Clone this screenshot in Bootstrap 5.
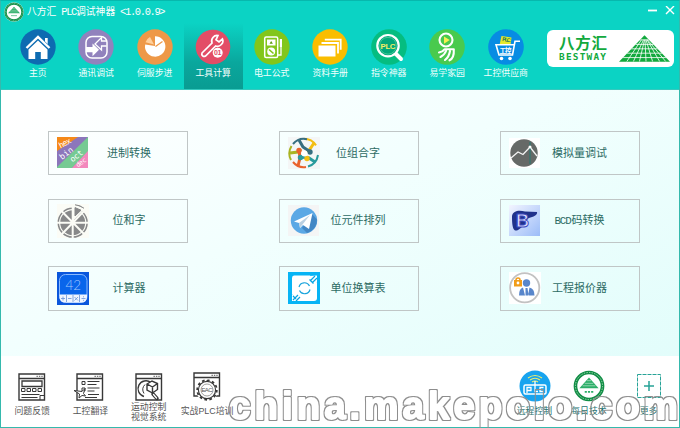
<!DOCTYPE html>
<html lang="zh-CN">
<head>
<meta charset="utf-8">
<meta name="viewport" content="width=device-width, initial-scale=1">
<title>八方汇 PLC调试神器</title>
<link rel="stylesheet" href="https://cdn.jsdelivr.net/npm/bootstrap@5.3.0/dist/css/bootstrap.min.css">
<style>
body{font-family:"Liberation Sans","Noto Sans CJK SC",sans-serif;width:680px;height:428px;line-height:1}
svg{display:block;flex:none}
.app{width:680px;height:428px;border:1px solid #35b9ad;border-top-color:#07b8ad;background:#fff}
.app-head{height:89px;background:#0bd3c4;border-bottom:1px solid #35c9be;color:#fff}
.title-row{height:22px;padding-left:3px;padding-right:4px}
.title-text{font-family:"Liberation Mono","Noto Sans CJK SC",monospace;font-size:9.8px;padding-left:3px;white-space:pre}
.half{font-size:10.4px;letter-spacing:-1.33px}
.main-tabs{height:66px;padding-left:7.5px}
.tab{width:58.5px;height:66px;padding-top:6px;color:#f2fffd;font-size:8.9px;white-space:nowrap}
.tab svg{margin-bottom:4px}
.tab-on{background:linear-gradient(#0bd3c4,#0aa79d 60%,#099c92)}
.brand-box{width:127px;height:37px;border-radius:6px;background:#fff;color:#12a93d;margin:7px 5px 0 auto;padding:0 4px 0 12px}
.brand-cn{font-size:15.5px;font-weight:700;letter-spacing:.7px}
.brand-en{font-family:"DejaVu Sans Mono","Liberation Mono",monospace;font-size:9.4px;font-weight:700;letter-spacing:1.25px;margin-top:1px;line-height:9px}
.tools{height:266px;padding:41px 0 0 47px;background:linear-gradient(155deg,#fff 5%,#f2fffe 45%,#e2fdfb)}
.tool-grid{display:grid;grid-template-columns:230.5px 221.5px 140px;row-gap:23.2px}
.tool{width:140px;height:44.4px;border:1px solid #c0c6c6;padding-left:8px;font-size:11px;color:#2c6b64}
.tool span{width:80px;text-align:center}
.tool:not(:nth-child(3n+1)) span{width:77px}
.tool i{font:10.8px "Liberation Mono",monospace;letter-spacing:-1.1px;margin-right:1px}
.foot{height:70px;font-size:8.9px;color:#555;white-space:nowrap}
.foot-left{padding-left:2px}
.foot-item{width:58.3px;padding-top:17px}
.foot-label{line-height:10px;text-align:center;height:20px;margin-top:1px}
.foot-right{margin-left:auto;color:#2b7370;padding-right:2px}
.foot-right .foot-item{width:57px;padding-top:14px}
.foot-right .foot-label{margin-top:0}
.foot-right .foot-item:nth-child(2){margin-left:-2.5px;margin-right:2.5px}
.wm{left:222px;top:377px;pointer-events:none}
</style>
<script src="https://cdn.jsdelivr.net/npm/bootstrap@5.3.0/dist/js/bootstrap.bundle.min.js"></script>
</head>
<body class="overflow-hidden m-0">
<svg width="0" height="0" class="position-absolute">
<defs>
<clipPath id="tri"><path d="M25 0L50 26H0z"/></clipPath>
<symbol id="pyr" viewBox="0 0 50 26"><path d="M25 0L50 26H0z" fill="#12a93d"/><path clip-path="url(#tri)" stroke="#fff" stroke-width=".8" fill="none" d="M0 4.5h50M0 9h50M0 13.3h50M0 17.6h50M0 21.9h50M22 4.5L7.5 26M24 4.5L14 26M25 4.5L20 26M25.5 4.5L26.5 26M26.5 4.5L33 26M27.5 4.5L40 26M28 4.5L46 26"/></symbol>
<symbol id="seal" viewBox="0 0 30 30"><circle cx="15" cy="15" r="14.6" fill="#fff"/><circle cx="15" cy="15" r="12.7" fill="#fff" stroke="#108d45" stroke-width="3.4"/><circle cx="15" cy="15" r="12.7" fill="none" stroke="#a5dcb6" stroke-width=".9" stroke-dasharray="1.3 1.2" pathLength="80"/><path d="M15 7l9 10H6z" fill="#2cae68"/><path d="M9 14.8h12M11 12.5h8M13 10h4" stroke="#c7ebd5" stroke-width=".6"/><path d="M11 20.5h8" stroke="#2cae68" stroke-width="1.5" stroke-dasharray="2 1"/></symbol>
<symbol id="win" viewBox="0 0 28 28"><path d="M1 1h25.5v26H1zM1 5.5h25.5" fill="none" stroke="#383838" stroke-width="1.4"/><path d="M18.5 3.3h6.5" stroke="#555" stroke-dasharray="1.4 1"/></symbol>
<filter id="edge" x="-2%" y="-10%" width="104%" height="120%"><feMorphology in="SourceAlpha" operator="dilate" radius="1" result="a"/><feComposite in="a" in2="SourceAlpha" operator="out" result="b"/><feFlood flood-color="#8d8d8d"/><feComposite in2="b" operator="in"/></filter>
</defs>
</svg>
<main class="app position-relative">
<header class="app-head">
<div class="title-row d-flex align-items-center">
<svg width="20" height="20"><use href="#seal"/></svg>
<span class="title-text">八方汇<span class="half"> PLC</span>调试神器<span class="half"> &lt;1.0.0.9&gt;</span></span>
<svg class="ms-auto" width="28" height="12" fill="none" stroke="#fff"><path d="M1 4.500h9" stroke-width="1.8"/><path d="M19 0l8 8M27 0l-8 8" stroke-width="1.4"/></svg>
</div>
<div class="d-flex">
<nav class="main-tabs d-flex">
<div class="tab d-flex flex-column align-items-center"><svg width="36" height="36" viewBox="0 0 36 36"><circle cx="18" cy="18" r="17.7" fill="#0d6bb1"/><path d="M6.5 19L18 8l11.5 11" stroke="#fff" stroke-width="2.4" fill="none"/><path d="M8.5 20.5L18 11.5l9.5 9V30h-6.7v-7h-5.6v7H8.5zM25 9h2.7v6L25 12.5z" fill="#fff"/></svg>主页</div>
<div class="tab d-flex flex-column align-items-center"><svg width="36" height="36" viewBox="0 0 36 36"><circle cx="18" cy="18" r="17.7" fill="#9182bd"/><rect x="8" y="7.5" width="21" height="21.5" rx="6" fill="none" stroke="#fff" stroke-width="1.5"/><path d="M8 18h6.5v-3.5l6.5 6.3-6.5 6.4v-4H8z" fill="#fff"/><path d="M28.5 12h-5V8.5L17 15l6.5 6v-4h5" fill="none" stroke="#fff" stroke-width="1.3"/></svg>通讯调试</div>
<div class="tab d-flex flex-column align-items-center"><svg width="36" height="36" viewBox="0 0 36 36"><circle cx="18" cy="18" r="17.7" fill="#ee9847"/><path d="M18 17V7.3A10.2 10.2 0 1 1 8.2 15.5z" fill="#fff"/><path d="M18.5 17.5l7-5" stroke="#ee9847" stroke-width="1.2"/><path d="M17 15.5L13 8a9 9 0 0 0-4.5 5.3z" fill="#ffd09c"/></svg>伺服步进</div>
<div class="tab tab-on d-flex flex-column align-items-center"><svg width="36" height="36" viewBox="0 0 36 36"><circle cx="18" cy="18" r="17.3" fill="#e34d66"/><path d="M7 24L17 14c-1.5-4 2-8.2 6-7.5l-2 4.3 3 2.2 3.5-3c1.7 3.8-2.5 8.5-6.8 7L10.5 27a2.4 2.4 0 0 1-3.5-3z" fill="none" stroke="#fff" stroke-width="1.7"/><circle cx="22.7" cy="23.7" r="5" fill="#fff"/><text x="19" y="26.3" font-size="7" font-weight="700" font-family="Liberation Sans" fill="#e34d66" textLength="7.4">01</text></svg>工具计算</div>
<div class="tab d-flex flex-column align-items-center"><svg width="36" height="36" viewBox="0 0 36 36"><circle cx="18" cy="18" r="17.7" fill="#82c61b"/><rect x="10.7" y="8" width="13" height="20.5" rx="1.5" fill="none" stroke="#fff" stroke-width="1.5"/><path d="M13 10.5h8.5v6H13z" fill="#fff"/><path d="M17.2 12l1.7 2.8h-3.4z" fill="#5c9d12"/><circle cx="17.2" cy="22.5" r="4" fill="#fff"/><path d="M15 20.5l4.5 4" stroke="#82c61b" stroke-width="1.6"/><path d="M24 26h3V11" stroke="#fff" stroke-width="1.3" fill="none"/><path d="M26.9 10v8" stroke="#fff" stroke-width="2.2"/></svg>电工公式</div>
<div class="tab d-flex flex-column align-items-center"><svg width="36" height="36" viewBox="0 0 36 36"><circle cx="18" cy="18" r="17.7" fill="#fabd00"/><path d="M6.5 16.5h17v11h-17z" fill="#fff"/><path d="M9.5 14h16.5v10.5M12.8 10.7h15.9v10" fill="none" stroke="#fff" stroke-width="1.8"/></svg>资料手册</div>
<div class="tab d-flex flex-column align-items-center"><svg width="36" height="36" viewBox="0 0 36 36"><circle cx="18" cy="18" r="17.8" fill="#05bd80"/><path d="M25 25l5 5" stroke="#fff" stroke-width="4" stroke-linecap="round"/><circle cx="17" cy="16.7" r="10.7" fill="#02a879" stroke="#fff" stroke-width="2.2"/><circle cx="17" cy="16.7" r="8.4" fill="none" stroke="#52cf9e" stroke-width=".8"/><text x="9.5" y="19.6" textLength="15" font-family="Liberation Sans" font-size="7.8" font-weight="700" fill="#f6ef65">PLC</text></svg>指令神器</div>
<div class="tab d-flex flex-column align-items-center"><svg width="36" height="36" viewBox="0 0 36 36"><circle cx="18" cy="18" r="17.8" fill="#49ca4e"/><g fill="none" stroke="#fff" stroke-width="2.1" stroke-linecap="round" stroke-linejoin="round"><circle cx="17" cy="11" r="6.5"/><path d="M10 23.5q4-1 5.5-3.2h9.3q.5 9-4.3 11M17 22q-1.5 4-5.500 6M21 22q-1 6-5 9"/></g><path d="M15 7.5l5.7 3.6-5.7 3.6z" fill="#f9f052"/></svg>易学家园</div>
<div class="tab d-flex flex-column align-items-center"><svg width="36" height="36" viewBox="0 0 36 36"><circle cx="18" cy="18" r="17.8" fill="#078ce3"/><path d="M13.5 7l10 1.5-1 7.5h-11z" fill="#e6eb2c"/><text x="14" y="12" transform="rotate(8 14 12)" textLength="8.5" font-size="5.5" font-weight="700" font-family="Liberation Sans" fill="#297652">PLC</text><path d="M32 12.3h-5L24.5 26H11L8 15.7h18" fill="none" stroke="#fff" stroke-width="1.6"/><text x="11.5" y="23.7" textLength="12" font-size="6.5" font-weight="700" font-family="Noto Sans CJK SC" fill="#fff">工控</text><circle cx="13.5" cy="29.5" r="1.8" fill="#fff"/><circle cx="22" cy="29.5" r="1.8" fill="#fff"/></svg>工控供应商</div>
</nav>
<div class="brand-box d-flex align-items-center justify-content-between"><div><div class="brand-cn">八方汇</div><div class="brand-en">BESTWAY</div></div><svg width="51" height="27"><use href="#pyr"/></svg></div>
</div>
</header>
<section class="tools">
<div class="tool-grid">
<div class="tool d-flex align-items-center"><svg width="32" height="32" viewBox="0 0 32 32"><path d="M0 0h31v31H0z" fill="#8c76bb"/><path d="M0 0h21L0 14z" fill="#f58918"/><path d="M31 0v16L15 31H0v-1z" fill="#76ca93"/><path d="M31 14v17H15z" fill="#f388bd"/><g fill="#fff" font-family="DejaVu Sans Mono" font-size="8"><text x="3.5" y="11.5" transform="rotate(-28 3.5 11.5)" textLength="13">hex</text><text x="5" y="23" transform="rotate(-38 5 23)" textLength="15">bin</text><text x="15.5" y="25.5" transform="rotate(-38 15.5 25.5)" textLength="14">oct</text><text x="21" y="30.5" transform="rotate(-36 21 30.5)" font-size="6.5" textLength="11">dec</text></g></svg><span>进制转换</span></div>
<div class="tool d-flex align-items-center"><svg width="32" height="32" viewBox="0 0 32 32"><path d="M0 0h32v32H0z" fill="#f4f6f6"/><path d="M16 1.8A14.2 14.2 0 0 1 28 8.4" fill="none" stroke="#f3bd10" stroke-width="2"/><path d="M26 6l-4 6-3 3" fill="none" stroke="#f3bd10" stroke-width="3"/><path d="M5 7A14.2 14.2 0 0 1 19 2.2" fill="none" stroke="#376e80" stroke-width="2"/><path d="M11 3l4 7 6 4" fill="none" stroke="#376e80" stroke-width="3"/><path d="M3 23A14.2 14.2 0 0 1 3.500 9" fill="none" stroke="#a9b522" stroke-width="2"/><path d="M2 16l8-1 3-3" fill="none" stroke="#a9b522" stroke-width="3"/><path d="M18 30A14.2 14.2 0 0 1 5 25" fill="none" stroke="#e9622c" stroke-width="2"/><path d="M10 29l2-8-1-8" fill="none" stroke="#e9622c" stroke-width="3"/><path d="M30 18A14.2 14.2 0 0 1 20 29.500" fill="none" stroke="#2a9a9c" stroke-width="2"/><path d="M27 25l-6-4-8-1" fill="none" stroke="#2a9a9c" stroke-width="3"/><circle cx="22" cy="15" r="2.700" fill="#376e80"/><circle cx="11" cy="13.500" r="2.700" fill="#e9622c"/><circle cx="12.500" cy="20.500" r="2.700" fill="#2a9a9c"/><circle cx="19" cy="21.500" r="2.700" fill="#f3bd10"/><circle cx="16.500" cy="16.500" r="3" fill="#fff"/></svg><span>位组合字</span></div>
<div class="tool d-flex align-items-center"><svg width="32" height="32" viewBox="0 0 32 32"><path d="M0 1h31v30H0z" fill="#fff"/><circle cx="15" cy="16" r="13.700" fill="#666967"/><path d="M2 21l7-6 5 2.500 7-7.500 7 9" fill="none" stroke="#f5f5f5" stroke-width="1.300"/><path d="M21 5v22" stroke="#267b72" stroke-width="1"/><circle cx="21" cy="10" r="1.500" fill="#fff"/></svg><span>模拟量调试</span></div>
<div class="tool d-flex align-items-center"><svg width="32" height="34" viewBox="0 0 32 34"><path d="M0 0h32v34H0z" fill="#fbfcf6"/><circle cx="15.700" cy="18.700" r="12.500" fill="#878889"/><circle cx="15.700" cy="18.700" r="14.400" fill="none" stroke="#878889" stroke-width="1.500"/><path d="M15.700 2v32M0 18.700h32M4.500 7l23 23.500M4.500 30.500L27 7" stroke="#fbfcf6" stroke-width="2"/><path d="M16 17V0h16z" fill="#fbfcf6"/><path d="M18 12V3.600l6 2.600zM18 .8q5 .2 9 3.500" fill="#878889" stroke="#878889"/></svg><span>位和字</span></div>
<div class="tool d-flex align-items-center"><svg width="32" height="32" viewBox="0 0 32 32"><path d="M0 0h31v31H0z" fill="#f4f5f5"/><circle cx="16" cy="15.500" r="13.200" fill="#5ba8e5"/><path d="M24 9l5 5.500a13 13 0 0 1-10 13.500l-5-5z" fill="#4387c5"/><path d="M6 16.500L24.500 8 21 24l-6-4-3 3-1-5z" fill="#fff"/><path d="M11 18l11-8-7.500 9.500-2.500 3z" fill="#bad0e2"/></svg><span>位元件排列</span></div>
<div class="tool d-flex align-items-center"><svg width="32" height="32" viewBox="0 0 32 32"><defs><linearGradient id="sky" x1="0" x2="1" y1="0" y2="1"><stop stop-color="#f3f5ff"/><stop offset="1" stop-color="#9bbcf8"/></linearGradient></defs><path d="M0 0h31v31H0z" fill="url(#sky)"/><path d="M3 11c1-6 8-6 13-4.500l12 .5c1 3-4 5-8 6-3 1-2 6-5 8-3 1-5 5-9 4.500C3 24 3 15 3 11z" fill="#20328b"/><text x="7" y="21.500" font-family="Liberation Sans" font-size="18" font-weight="700" fill="#dfe1fb" stroke="#3d4bc0" stroke-width="1">B</text></svg><span><i>BCD</i>码转换</span></div>
<div class="tool d-flex align-items-center"><svg width="32" height="33" viewBox="0 0 32 33"><path d="M0 0h32v33H0z" fill="#0b57dc"/><rect x="2.500" y="2.500" width="27.500" height="28" rx="6" fill="#0965eb" stroke="#8abaff"/><path d="M2.500 22.500H30V25q0 5.500-6 5.500H8.500Q2.500 30.500 2.500 25z" fill="#eff5ff"/><text x="8.500" y="17.500" font-family="Lato,sans-serif" font-weight="300" font-size="13.500" fill="#a3c8ff">42</text><path d="M9.500 23v7M16 23v7M22.500 23v7M4 26.500h4M6 24.500v4M11 26.500h3.500M17.500 25l3.500 3.500M21 25l-3.500 3.500M24.500 26.500h4M26.500 24.300v1M26.500 27.800v1" stroke="#6792d7" stroke-width=".8"/></svg><span>计算器</span></div>
<div class="tool d-flex align-items-center"><svg width="32" height="32" viewBox="0 0 32 32"><path d="M0 0h32v32H0z" fill="#07b4f5"/><path d="M6 3.500h16l7 7V26q0 3-3 3H10l-6-7V6q0-2.500 2-2.500z" fill="#fff"/><path d="M22 4l7 7V3.500zM4 22l7 7H4z" fill="#fff"/><path d="M22 9l5-5M24 11l5-5M21.500 7.500l4 4M5 28l5-5M8 29l4-4M5 24l3 3" stroke="#07a4e2" stroke-width="1.200"/><path d="M11 15a5.600 5.600 0 0 1 10.500-1M22 17.500a5.600 5.600 0 0 1-10.500 1" fill="none" stroke="#1aa4dc" stroke-width="1.200"/></svg><span>单位换算表</span></div>
<div class="tool d-flex align-items-center"><svg width="32" height="32" viewBox="0 0 32 32"><path d="M0 0h32v32H0z" fill="#fff"/><circle cx="15.700" cy="15.700" r="14.600" fill="#fff" stroke="#c2c2c2" stroke-width="1.800"/><path d="M5 8h8v6.500H5z" fill="#f19d19"/><circle cx="9" cy="8" r="2" fill="none" stroke="#f19d19" stroke-width="1.500"/><circle cx="9" cy="11" r="1.400" fill="#fff"/><circle cx="17.500" cy="11" r="3.700" fill="#5886cb"/><path d="M10 23.500q0-7 4-8l2 8zM25.500 23.500q0-7-5-8l-1.500 8zM16.500 16h2l1 7.500h-3z" fill="#5886cb"/></svg><span>工程报价器</span></div>
</div>
</section>
<footer class="foot d-flex">
<div class="foot-left d-flex">
<div class="foot-item"><svg class="mx-auto" width="28" height="28"><use href="#win"/><path d="M4 8h20v5.500H4z" fill="none" stroke="#383838" stroke-width="1.300"/><path d="M3.500 15.500h3.500v3H3.500zM9 15.500h3.500v3H9zM14.500 15.500H18v3h-3.500zM20 15.500h3.500v3H20z" fill="none" stroke="#383838"/><path d="M3.500 21.500h18M3.500 24.500h16M22 27v-4.500h4.500" stroke="#383838" fill="none"/></svg><div class="foot-label pt-1">问题反馈</div></div>
<div class="foot-item"><svg class="mx-auto overflow-visible" width="28" height="28"><use href="#win"/><path d="M6 8.500h3v3H6zM6 15h3v3H6z" fill="none" stroke="#383838"/><path d="M11.500 8.500h12M11.500 11.500h9M11.500 15h12M11.500 18h7M12 21.500h11M9 24.500h12" stroke="#383838" stroke-width="1.200"/><path d="M-2 17.500l8 1 3-3-1.500 5 2 2.500-3.500-.5L3 25l.500-4z" fill="#fff" stroke="#383838"/></svg><div class="foot-label pt-1">工控翻译</div></div>
<div class="foot-item"><svg class="mx-auto" width="28" height="28"><use href="#win"/><circle cx="13" cy="16" r="8.500" fill="#fff"/><path d="M9 23.500A8 8 0 1 1 16 9.500" fill="none" stroke="#383838" stroke-width="1.400"/><path d="M9 20.500q-3-5 1-9" stroke="#383838" fill="none"/><path d="M12 11l5-3 5.500 2.500v6L17.500 20 12 17zM12 11l5.500 3 5-3.500M17.500 14v6" fill="#fff" stroke="#383838" stroke-width="1.400"/><path d="M18 21l4 4.500" stroke="#383838" stroke-width="3.500" stroke-linecap="round"/><path d="M18.500 21.500l3 3.500" stroke="#fff" stroke-width="1.300" stroke-linecap="round"/></svg><div class="foot-label">运动控制<br>视觉系统</div></div>
<div class="foot-item"><svg class="mx-auto overflow-visible" width="28" height="28" viewBox="0 1 28 28"><path d="M1 1h25.500v23H1zM1 5.500h25.500" fill="none" stroke="#383838" stroke-width="1.400"/><path d="M18.500 3.300h6.500" stroke="#555" stroke-dasharray="1.400 1"/><circle cx="14" cy="18" r="11" fill="#fff"/><circle cx="14" cy="18" r="9.800" fill="none" stroke="#383838" stroke-width="1.800" stroke-dasharray="2.600 2.400" pathLength="60"/><circle cx="14" cy="18" r="8.600" fill="#fff" stroke="#383838" stroke-width="1.200"/><circle cx="14" cy="18" r="6" fill="none" stroke="#777" stroke-width=".7"/><text x="8.500" y="20.300" textLength="11" font-family="Liberation Sans" font-size="6" fill="#555">EAC</text></svg><div class="foot-label pt-1">实战PLC培训</div></div>
</div>
<div class="foot-right d-flex">
<div class="foot-item"><svg class="mx-auto" width="32" height="32"><circle cx="16" cy="16" r="15.500" fill="#18a4ef"/><path d="M9 8q7-5 14 0M11 10q5-3.500 10 0M13 12q3-2 6 0" fill="none" stroke="#e9ed72" stroke-width="1.200"/><rect x="5" y="15" width="22" height="9" rx="1.500" fill="none" stroke="#fff" stroke-width="1.500"/><path d="M8 23v-5.500h4v3H8M16 11v10.500h3M24.500 17.500H21v4h3.500" fill="none" stroke="#fff" stroke-width="1.300"/></svg><div class="foot-label pt-1">远程控制</div></div>
<div class="foot-item"><svg class="mx-auto" width="32" height="32"><use href="#seal"/></svg><div class="foot-label pt-1">每日技术</div></div>
<div class="foot-item"><svg class="mx-auto" width="32" height="32"><rect x="4.500" y="4.500" width="23" height="23" fill="none" stroke="#27a397" stroke-dasharray="4 1"/><path d="M11 16h10M16 11v10" stroke="#27a397" stroke-width="1.500"/></svg><div class="foot-label pt-1">更多</div></div>
</div>
</footer>
<svg class="wm position-absolute" width="457" height="50"><text x="6" y="41" textLength="449" filter="url(#edge)" font-family="Liberation Sans" font-size="38.500" font-weight="700" stroke="#000" stroke-width="1.800" stroke-linejoin="round">china.makepolo.com</text></svg>
</main>
</body>
</html>
